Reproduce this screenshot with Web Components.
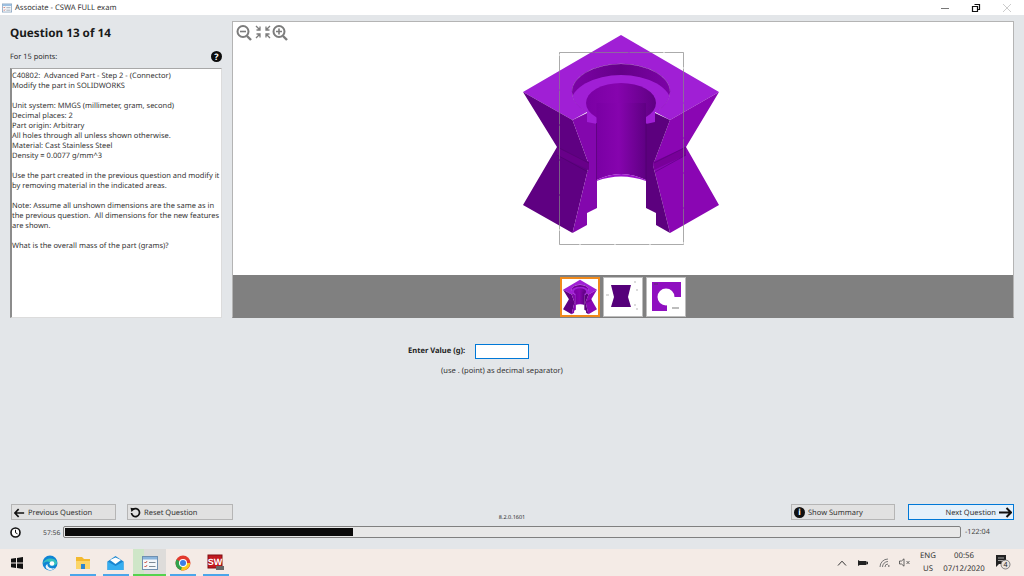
<!DOCTYPE html>
<html lang="en">

<head>
  <meta charset="UTF-8">
  <title>Associate - CSWA FULL exam</title>
  <style>
    html, body { margin: 0; height: 100%; overflow: hidden; }
    body { font-family: "Noto Sans", "Open Sans", sans-serif; color: #2b2b2b; text-rendering: geometricPrecision; }
  </style>
</head>

<body>
  <template id="exam-app">
    <style>
      :host { display: flex; flex-direction: column; width: 1024px; height: 576px; }
      main { flex: 1; min-height: 0; display: flex; flex-direction: column; background: #e3e6e9; }
      .top { display: grid; grid-template-columns: 212px 782px; gap: 10px; padding: 6px 0 0 10px; height: 297px; }
      .foot { margin-top: auto; }
    </style>
    <win-titlebar></win-titlebar>
    <main>
      <div class="top">
        <question-pane></question-pane>
        <viewer-panel></viewer-panel>
      </div>
      <answer-form></answer-form>
      <div class="foot">
        <exam-actions></exam-actions>
        <exam-progress></exam-progress>
      </div>
    </main>
    <task-bar></task-bar>
  </template>

  <template id="win-titlebar">
    <style>
      :host { display: flex; align-items: center; height: 15px; background: #fff; font-size: 7.600px; color: #333; }
      svg { display: block; }
      .app { margin: 0 3px 0 2px; }
      .title { flex: 1; }
      .ctl { width: 31px; display: flex; justify-content: center; }
    </style>
    <app-glyph class="app" style="width:10px;height:10px"></app-glyph>
    <span class="title">Associate - CSWA FULL exam</span>
    <span class="ctl"><svg width="10" height="10"><path d="M1 5.500h8" stroke="#777"/></svg></span>
    <span class="ctl"><svg width="10" height="10"><path d="M3.500 1.500h5v5h-1.500M1.500 3.500h5v5h-5z" fill="none" stroke="#111" stroke-width="1.200"/></svg></span>
    <span class="ctl" style="margin-right:2px"><svg width="10" height="10"><path d="M1 1l8 8M9 1l-8 8" stroke="#ccc"/></svg></span>
  </template>

  <template id="app-glyph">
    <style>:host { display: inline-block; } svg { display: block; width: 100%; height: 100%; }</style>
    <svg viewBox="0 0 16 16">
      <rect x=".5" y="1.500" width="15" height="13" fill="#f4f7fa" stroke="#6f8fb0"/>
      <rect x="1" y="2" width="14" height="2.500" fill="#8ab4dc"/>
      <path d="M2.500 7l1 1 1.500-1.800M2.500 11l1 1 1.500-1.800" fill="none" stroke="#c8402e"/>
      <path d="M7 7.500h6.500M7 11.500h6.500" stroke="#7d8a96"/>
    </svg>
  </template>

  <template id="question-pane">
    <style>
      :host { display: flex; flex-direction: column; min-height: 0; }
      .head { height: 47px; position: relative; }
      h1 { margin: 0; padding-top: 5px; font-size: 11.700px; line-height: 15px; font-weight: 700; color: #1a1a1a; }
      .points { margin-top: 10px; font-size: 7.400px; line-height: 12px; display: flex; justify-content: space-between; align-items: flex-start; }
      .help { width: 11px; height: 11px; border-radius: 50%; background: #0c0c0c; color: #fff; font-size: 9px; font-weight: 700; line-height: 11px; text-align: center; }
      .box {
        flex: 1; box-sizing: border-box; background: #fff; border: 1px solid #a8a8a8; border-left: 2px solid #8c8c8c;
        border-right-color: #dcdcdc; border-bottom-color: #dcdcdc; padding: 2px 0 0 0;
        font-size: 7.500px; line-height: 10px; white-space: pre; color: #333;
      }
    </style>
    <div class="head">
      <h1>Question 13 of 14</h1>
      <div class="points"><span>For 15 points:</span><span class="help">?</span></div>
    </div>
    <div class="box">C40802:  Advanced Part - Step 2 - (Connector)
Modify the part in SOLIDWORKS

Unit system: MMGS (millimeter, gram, second)
Decimal places: 2
Part origin: Arbitrary
All holes through all unless shown otherwise.
Material: Cast Stainless Steel
Density = 0.0077 g/mm^3

Use the part created in the previous question and modify it
by removing material in the indicated areas.

Note: Assume all unshown dimensions are the same as in
the previous question.  All dimensions for the new features
are shown.

What is the overall mass of the part (grams)?</div>
  </template>

  <template id="part-figure">
    <style>
      :host { display: block; }
      svg { display: block; width: 100%; height: 100%; }
      :host([thumb]) .frame { display: none; }
    </style>
    <svg preserveAspectRatio="xMidYMid meet">
      <defs>
        <linearGradient id="bore" x1="0" x2="1" y1="0" y2="0">
          <stop offset="0" stop-color="#7a00a4"/>
          <stop offset=".45" stop-color="#8604ae"/>
          <stop offset="1" stop-color="#5f0083"/>
        </linearGradient>
        <linearGradient id="wall" x1="0" x2="1" y1="0" y2="0">
          <stop offset="0" stop-color="#7c02a6"/>
          <stop offset=".5" stop-color="#650089"/>
          <stop offset="1" stop-color="#7c02a6"/>
        </linearGradient>
        <clipPath id="seat"><ellipse cx="621" cy="92" rx="49" ry="28"/></clipPath>
      </defs>
      <!-- top face, open at the front where the section cuts it -->
      <path d="M621 35L719 92L670 120L655 112A49 28 0 1 0 587 112L572.500 120L523 92Z" fill="#a01fd5"/>
      <ellipse cx="621" cy="92" rx="49" ry="28" fill="url(#wall)"/>
      <ellipse cx="621" cy="103" rx="50" ry="28" fill="#a01fd5" clip-path="url(#seat)"/>
      <path d="M572 92A49 28 0 0 1 670 92" fill="none" stroke="#7a1aa0" stroke-width=".6"/>
      <path d="M587 100H655V126H587Z" fill="#a01fd5"/>
      <ellipse cx="621" cy="103" rx="35" ry="20" fill="url(#bore)"/>
      <path d="M596.500 103H646V180Q621 168 596.500 180Z" fill="url(#bore)"/>
      <path d="M596.500 180Q621 168 646 180V181Q621 172 596.500 181Z" fill="#9b12cb"/>
      <!-- left half -->
      <path d="M523 92L572.500 120L589 165L572.500 233L523 205L557 147Z" fill="#5f0082"/>
      <path d="M572.500 120L587 113V122L597 124V208L587 213V225L572.500 233L589 165Z" fill="#8307ad"/>
      <path d="M557 147L589 162L589 170L557 155Z" fill="#680089"/>
      <path d="M557 147L589 163M557 155L588 172" stroke="#4c0069" stroke-width=".6"/>
      <!-- right half -->
      <path d="M719 92L670 120L653 165L670 233L719 205L686 147Z" fill="#8a06b3"/>
      <path d="M670 120L655 113V122L646 124V208L656 213V225L670 233L653 165Z" fill="#5c007e"/>
      <path d="M686 147L653 162L654 170L686 155Z" fill="#780099"/>
      <path d="M686 147L654 163M686 155L655 172" stroke="#56007a" stroke-width=".6"/>
      <path d="M596.500 123V180M646 123V180" stroke="#4c0069" stroke-width=".6"/>
      <rect class="frame" x="559.500" y="52.500" width="124" height="192" fill="none" stroke="#888" stroke-opacity=".7" stroke-dasharray="34 1"/>
    </svg>
  </template>

  <template id="viewer-panel">
    <style>
      :host { display: flex; flex-direction: column; box-sizing: border-box; border: 1px solid #b4b4b4; border-bottom-color: #808080; background: #fff; position: relative; }
      .stage { flex: 1; min-height: 0; }
      part-figure { width: 100%; height: 100%; }
      .zoom { position: absolute; left: 2px; top: 2px; display: flex; }
      .strip { height: 42px; background: #808080; display: flex; justify-content: center; padding-top: 2px; box-sizing: border-box; }
      .strip-in { display: flex; gap: 3px; }
      .thumb { width: 40px; height: 40px; box-sizing: border-box; background: #fff; border: 1px solid #bdbdbd; }
      .thumb.on { border: 2px solid #f08a1c; }
      .thumb svg { display: block; width: 100%; height: 100%; }
    </style>
    <div class="stage"><part-figure view="233 22 780 253"></part-figure></div>
    <div class="zoom">
      <svg width="54" height="18" viewBox="0 0 54 18" fill="none" stroke="#7c7c7c">
        <circle cx="8" cy="7.500" r="5.500" stroke-width="2"/><path d="M5 7.500h6" stroke-width="1.600"/><path d="M12 12l4 4" stroke-width="2.400"/>
        <path d="M21 2l4 4M25 2.500v3.500h-3.500M35 2l-4 4M31 2.500v3.500h3.500M21 14l4-4M25 13.500v-3.500h-3.500M35 14l-4-4M31 13.500v-3.500h3.500" stroke-width="1.300"/>
        <circle cx="44" cy="7.500" r="5.500" stroke-width="2"/><path d="M41 7.500h6M44 4.500v6" stroke-width="1.600"/><path d="M48 12l4 4" stroke-width="2.400"/>
      </svg>
    </div>
    <div class="strip">
      <div class="strip-in">
        <div class="thumb on"><part-figure thumb view="517 30 208 208"></part-figure></div>
        <div class="thumb">
          <svg viewBox="0 0 38 38">
            <path d="M7 7H27L24 19L27 29H7L10 19Z" fill="#55007a"/>
            <path d="M30 4h2M32 12h2M30 27h2M32 31h2M2 17h3" stroke="#999" stroke-width=".7"/>
          </svg>
        </div>
        <div class="thumb">
          <svg viewBox="0 0 38 38">
            <path d="M5 4H34V19H20V33H5Z" fill="#8f0fc0"/>
            <circle cx="19" cy="19" r="8.500" fill="#fff"/>
            <path d="M7 6h4M25 30h7" stroke="#444" stroke-width=".7"/>
          </svg>
        </div>
      </div>
    </div>
  </template>

  <template id="answer-form">
    <style>
      :host { display: block; padding: 25px 0 0 408px; font-size: 7.550px; color: #333; }
      .row { display: flex; align-items: center; gap: 11px; height: 16px; }
      label { font-weight: 700; width: 56px; white-space: nowrap; color: #222; }
      input { width: 54px; height: 15px; box-sizing: border-box; margin: 0; padding: 0 2px; border: 1px solid #0078d7; background: #fff; outline: none; }
      .hint { margin: 6px 0 0 33px; line-height: 12px; }
    </style>
    <div class="row"><label for="v">Enter Value (g):</label><input id="v" type="text"></div>
    <div class="hint">(use . (point) as decimal separator)</div>
  </template>

  <template id="exam-button">
    <style>
      :host { display: block; box-sizing: border-box; height: 16px; width: var(--w, 105px); border: 1px solid #b5b5b5; background: #e1e1e1; font-size: 7.500px; color: #333; }
      :host([primary]) { border-color: #0078d7; background: #e5f1fb; }
      .in { display: flex; align-items: center; box-sizing: border-box; height: 100%; gap: 3px; padding: 1px 1px 0 2px; }
      :host([primary]) .in { justify-content: flex-end; }
    </style>
    <div class="in"><slot></slot></div>
  </template>

  <template id="exam-actions">
    <style>
      :host { display: flex; padding: 0 10px 0 11px; height: 16px; }
      svg { display: block; flex: none; }
      .gap { width: 11px; }
      .version { flex: 1; text-align: center; align-self: flex-end; font-size: 5.500px; line-height: 8px; transform: translateY(1px); color: #333; }
      .gap2 { width: 13px; }
      .info { width: 11px; height: 11px; border-radius: 50%; background: #111; color: #fff; font-size: 8.500px; font-weight: 700; line-height: 11px; text-align: center; }
    </style>
    <exam-button>
      <svg width="11" height="10" viewBox="0 0 13 11"><path d="M1 5.500H12M5.500 1L1 5.500L5.500 10" fill="none" stroke="#111" stroke-width="2"/></svg>
      <span>Previous Question</span>
    </exam-button>
    <span class="gap"></span>
    <exam-button style="--w:106px">
      <svg width="11" height="11" viewBox="0 0 11 11"><path d="M2.800 2.600A4 4 0 1 1 1.500 6" fill="none" stroke="#111" stroke-width="1.700"/><path d="M.5 .8L5 1.500L1.500 5Z" fill="#111"/></svg>
      <span>Reset Question</span>
    </exam-button>
    <span class="version">8.2.0.1601</span>
    <exam-button style="--w:104px"><span class="info">i</span><span>Show Summary</span></exam-button>
    <span class="gap2"></span>
    <exam-button primary style="--w:106px">
      <span>Next Question</span>
      <svg width="13" height="11" viewBox="0 0 13 11"><path d="M0 5.500H11M7.500 1L12 5.500L7.500 10" fill="none" stroke="#111" stroke-width="2"/></svg>
    </exam-button>
  </template>

  <template id="exam-progress">
    <style>
      :host { display: flex; align-items: center; height: 12px; margin: 6px 0 11px; padding-left: 10px; color: #444; }
      svg { display: block; flex: none; }
      .elapsed { margin-left: 22px; width: 20px; font-size: 6.800px; white-space: nowrap; }
      .track { width: 898px; height: 12px; box-sizing: border-box; border: 1px solid #808080; border-radius: 2px; background: #e8e8e8; padding: 1px; }
      .fill { width: 288px; height: 100%; background: #0a0a0a; }
      .left { margin-left: 4px; white-space: nowrap; font-size: 7.200px; }
    </style>
    <svg width="11" height="11" viewBox="0 0 11 11"><circle cx="5.500" cy="5.500" r="4.500" fill="#fff" stroke="#111" stroke-width="1.600"/><path d="M5.500 2.800V5.700L7.500 6.800" fill="none" stroke="#111"/></svg>
    <span class="elapsed">57:56</span>
    <div class="track"><div class="fill"></div></div>
    <span class="left">-122:04</span>
  </template>

  <template id="task-bar">
    <style>
      :host { display: flex; align-items: stretch; height: 27px; background: #f4ebe6; font-size: 8px; color: #333; }
      svg { display: block; }
      .apps { display: flex; flex: 1; }
      .app { width: 33px; box-sizing: border-box; display: flex; align-items: center; justify-content: center; border-bottom: 2px solid transparent; position: relative; padding-top: 2px; }
      .open::after { content: ""; position: absolute; left: 4px; right: 3px; bottom: -2px; height: 2px; background: #4ba6ea; }
      .active { margin-left: 1px; background: linear-gradient(90deg, #cfe6c8 0 32%, #dedcda 32%); border-bottom-color: #55d24e; }
      .tray { display: flex; align-items: center; padding-right: 8px; }
      .tray > * { flex: none; }
      .ico { width: 21px; display: flex; justify-content: center; }
      .lang { width: 24px; margin-left: .5px; text-align: center; line-height: 13px; font-size: 7.800px; }
      .clock { width: 48px; text-align: center; line-height: 13px; font-size: 7.800px; }
      .note { width: 28px; display: flex; justify-content: center; }
    </style>
    <div class="apps">
      <div class="app"><svg width="12" height="12" viewBox="0 0 12 12" fill="#111"><path d="M0 1.800L5 1V5.500H0ZM6 .9L12 0V5.500H6ZM0 6.500H5V11L0 10.200ZM6 6.500H12V12L6 11.100Z"/></svg></div>
      <div class="app"><svg width="16" height="16" viewBox="0 0 16 16"><circle cx="8" cy="8" r="7.500" fill="#0f84d4"/><path d="M1 9C2 3 12 1.500 15 7C15.500 10 12 11 8.500 10.500C6.500 10 6.500 8 8 7.500C6 5.500 2.500 6.500 1 9Z" fill="#35c1c0"/><path d="M5.500 9C5 12 9 14.500 13 13C10.500 15.800 6 15.800 4 13C3 11.500 4 9.500 5.500 9Z" fill="#fff" opacity=".9"/><circle cx="10" cy="8.500" r="2.300" fill="#fff"/></svg></div>
      <div class="app open"><svg width="16" height="14" viewBox="0 0 16 14"><path d="M1 1H7L9 3H15V12H1Z" fill="#f3b92f"/><path d="M1 5H15V13H1Z" fill="#fbd568"/><rect x="6" y="8" width="4" height="5" fill="#2d86d1"/></svg></div>
      <div class="app open"><svg width="17" height="14" viewBox="0 0 17 14"><path d="M.5 5.500L8.500 0L16.500 5.500V14H.5Z" fill="#1a86d0"/><path d="M.5 5.500L8.500 10L16.500 5.500V14H.5Z" fill="#36aef0"/><path d="M3 4L8.500 1.500L14 4L8.500 8Z" fill="#fff"/></svg></div>
      <div class="app active"><app-glyph style="width:16px;height:16px"></app-glyph></div>
      <div class="app open"><svg width="16" height="16" viewBox="0 0 16 16"><circle cx="8" cy="8" r="7.500" fill="#e2392d"/><path d="M8 8L1.400 4.500A7.500 7.500 0 0 0 7 15.400Z" fill="#31a24c"/><path d="M8 8H15.200A7.500 7.500 0 0 1 6 15.300Z" fill="#f8c91c"/><circle cx="8" cy="8" r="4" fill="#fff"/><circle cx="8" cy="8" r="3" fill="#3b7fe6"/></svg></div>
      <div class="app open"><svg width="18" height="17" viewBox="0 0 18 17"><rect x="1" y="1" width="14" height="13" fill="#c2191f" stroke="#7c0f13"/><rect x="9" y="12" width="8" height="4" fill="#666"/><text x="8" y="11" text-anchor="middle" font-family="Liberation Sans, sans-serif" font-size="9" font-weight="700" fill="#fff">SW</text></svg></div>
    </div>
    <div class="tray">
      <span class="ico"><svg width="10" height="6" viewBox="0 0 10 6"><path d="M1 5.500L5 1.200L9 5.500" fill="none" stroke="#333"/></svg></span>
      <span class="ico"><svg width="10" height="6" viewBox="0 0 12 7"><path d="M0 0L2 1H10V6H2L0 7Z" fill="#222"/><rect x="10" y="2" width="2" height="3" fill="#222"/></svg></span>
      <span class="ico"><svg width="11" height="10" viewBox="0 0 11 10" fill="none" stroke="#777"><path d="M1 9A8 8 0 0 1 9 1M3.500 9A5.500 5.500 0 0 1 9 3.500M6 9A3 3 0 0 1 9 6"/><path d="M9 8h1.500" stroke="#333"/></svg></span>
      <span class="ico"><svg width="12" height="9" viewBox="0 0 12 9" fill="none" stroke="#444" stroke-width=".8"><path d="M.5 3H2.500L5 .8V8.200L2.500 6H.5Z"/><path d="M7.500 3l3 3M10.500 3l-3 3"/></svg></span>
      <span class="lang">ENG<br>US</span>
      <span class="clock">00:56<br>07/12/2020</span>
      <span class="note"><svg width="17" height="15" viewBox="0 0 17 15"><path d="M2 0H12V9H5L2 12Z" fill="#222"/><path d="M4 3H10M4 5.500H10" stroke="#ddd" stroke-width=".7"/><circle cx="11.500" cy="9.500" r="4.500" fill="#e8e2dd" stroke="#555" stroke-width=".7"/><text x="11.500" y="12" text-anchor="middle" font-family="Noto Sans, sans-serif" font-size="7" fill="#222">4</text></svg></span>
    </div>
  </template>

  <exam-app></exam-app>

  <script type="module">
    // every element just clones the template that carries its tag name
    class TemplateElement extends HTMLElement {
      constructor() {
        super();
        const template = document.getElementById(this.localName);
        this.attachShadow({ mode: 'open' }).appendChild(document.importNode(template.content, true));
      }
    }

    class PartFigure extends TemplateElement {
      connectedCallback() {
        this.shadowRoot.querySelector('svg').setAttribute('viewBox', this.getAttribute('view'));
      }
    }

    class ExamApp extends TemplateElement {}
    class WinTitlebar extends TemplateElement {}
    class AppGlyph extends TemplateElement {}
    class QuestionPane extends TemplateElement {}
    class ViewerPanel extends TemplateElement {}
    class AnswerForm extends TemplateElement {}
    class ExamButton extends TemplateElement {}
    class ExamActions extends TemplateElement {}
    class ExamProgress extends TemplateElement {}
    class TaskBar extends TemplateElement {}

    customElements.define('app-glyph', AppGlyph);
    customElements.define('part-figure', PartFigure);
    customElements.define('exam-button', ExamButton);
    customElements.define('win-titlebar', WinTitlebar);
    customElements.define('question-pane', QuestionPane);
    customElements.define('viewer-panel', ViewerPanel);
    customElements.define('answer-form', AnswerForm);
    customElements.define('exam-actions', ExamActions);
    customElements.define('exam-progress', ExamProgress);
    customElements.define('task-bar', TaskBar);
    customElements.define('exam-app', ExamApp);
  </script>
</body>

</html>
